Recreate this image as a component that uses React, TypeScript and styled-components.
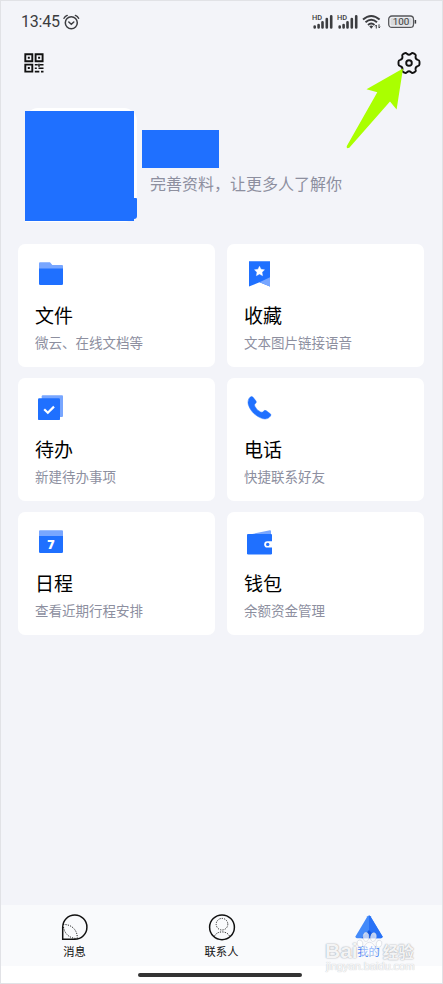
import React from 'react';
import styled, { createGlobalStyle } from 'styled-components';

const BLUE = '#1f70ff';
const LIGHT_BLUE = '#78a6ff';

const GlobalStyle = createGlobalStyle`
    * {
        box-sizing: border-box;
    }

    body {
        margin: 0;
        font-family: Roboto, 'Noto Sans CJK SC', sans-serif;
        color: #000;
    }
`;

const Screen = styled.div`
    display: flex;
    flex-direction: column;
    width: 443px;
    height: 984px;
    background: #f3f4f9;
    border: 1px solid #e1e2e6;
    overflow: hidden;
`;

const StatusBar = styled.div`
    display: flex;
    align-items: center;
    justify-content: space-between;
    height: 41px;
    padding: 1px 25px 0 20px;
`;

const StatusGroup = styled.div`
    display: flex;
    align-items: center;
    gap: 3px;
`;

const Clock = styled.span`
    font-family: Roboto, sans-serif;
    font-size: 16px;
    line-height: 20px;
    letter-spacing: -0.2px;
    color: #3b3c40;
`;

const Battery = styled.svg`
    margin-left: 3px;
`;

const Toolbar = styled.div`
    position: relative;
    display: flex;
    align-items: center;
    justify-content: space-between;
    height: 42px;
    padding: 0 21px 0 22px;
`;

const Pointer = styled.svg`
    position: absolute;
    left: 343px;
    top: 25px;
`;

const Profile = styled.div`
    display: flex;
    height: 159px;
    padding: 24px 0 0 24px;
`;

const Avatar = styled.div`
    width: 112px;
    height: 114px;
    padding-top: 3px;
    background: #fff;
    border-radius: 13px 13px 13px 0;
`;

const AvatarCover = styled.div`
    position: relative;
    width: 109px;
    height: 110px;
    background: ${BLUE};

    &::after {
        content: '';
        position: absolute;
        left: 109px;
        bottom: 2px;
        width: 3px;
        height: 21px;
        background: ${BLUE};
        border-radius: 0 1px 3px 0;
    }
`;

const ProfileInfo = styled.div`
    display: flex;
    flex-direction: column;
    padding: 22px 0 0 5px;
`;

const NameCover = styled.div`
    width: 77px;
    height: 38px;
    background: ${BLUE};
`;

const Signature = styled.div`
    margin: 5px 0 0 8px;
    font-size: 16px;
    line-height: 24px;
    color: #8d8f9f;
    white-space: nowrap;
`;

const CardGrid = styled.div`
    display: grid;
    grid-template-columns: 197px 197px;
    grid-auto-rows: 122.6px;
    gap: 11.5px 12px;
    padding: 1px 0 0 17px;
    flex: 1;
`;

const Card = styled.div`
    display: flex;
    flex-direction: column;
    padding: 15px 17px 0;
    background: #fff;
    border-radius: 7px;
`;

const CardIcon = styled.svg`
    flex: none;
    width: 30px;
    height: 30px;
`;

const CardTitle = styled.div`
    margin-top: 15.5px;
    font-size: 19px;
    line-height: 24px;
`;

const CardNote = styled.div`
    margin-top: 4.5px;
    font-size: 13.5px;
    line-height: 20px;
    color: #8d8f9f;
    white-space: nowrap;
`;

const TabBar = styled.div`
    position: relative;
    display: flex;
    height: 61px;
    background: #f9fafc;
`;

const Tab = styled.div<{ $active?: boolean }>`
    display: flex;
    flex: 1;
    flex-direction: column;
    align-items: center;
    padding-top: 8px;
    font-size: 11.3px;
    line-height: 16px;
    color: ${({ $active }) => ($active ? '#3f82f8' : '#111')};

    svg {
        margin-bottom: 3px;
    }
`;

const HomeArea = styled.div`
    display: flex;
    justify-content: center;
    height: 17px;
    padding-top: 7px;
    background: #fff;
`;

const HomeIndicator = styled.div`
    width: 164px;
    height: 4px;
    margin-right: 3px;
    border-radius: 2px;
    background: #333;
`;

const Watermark = styled.div`
    position: absolute;
    left: 324px;
    top: 24px;
    width: 94px;
    color: rgba(255, 255, 255, 0.9);
    text-shadow: 0 0 1px #a4a7ad, 0 0 2px #bcbec3;
    white-space: nowrap;
`;

const WatermarkBrand = styled.div`
    display: flex;
    align-items: center;
    height: 31px;
    padding-top: 12px;
    font-family: 'Liberation Sans', 'Noto Sans CJK SC', sans-serif;
    font-size: 21px;
    font-weight: bold;
    line-height: 18px;

    svg {
        flex: none;
        margin: -14px 0 0 -2px;
    }
`;

const WatermarkSuffix = styled.span`
    font-family: 'Noto Sans CJK SC', sans-serif;
    font-size: 15.5px;
    line-height: 16px;
`;

const WatermarkUrl = styled.div`
    font-family: 'Liberation Sans', sans-serif;
    font-size: 11.3px;
    line-height: 12px;
    padding: 0 0 0 1px;
    letter-spacing: -0.15px;
    text-shadow: 0 0 1px #c4c6cb, 0 0 1px #d4d6da;
`;

const AlarmIcon = () => (
    <svg width="17" height="17" viewBox="0 0 17 17" fill="none" stroke="#3b3c40" strokeWidth="1.5" strokeLinecap="round">
        <circle cx="8.3" cy="8.8" r="6" />
        <path d="M5.8 8l2.5 2.2L10.8 8M1 4.3Q2 2.2 4.2 1.4M15.6 4.3Q14.6 2.2 12.4 1.4" />
    </svg>
);

const SignalIcon = () => (
    <svg width="22" height="16" viewBox="0 0 22 16">
        <text x="0" y="6.2" fontFamily="Roboto, sans-serif" fontSize="7.4" fontWeight="500" fill="#3b3c40">HD</text>
        <path d="M2.7 13.5v-1M6.6 13.5v-2.5M10.5 13.5V8.3M14.8 13.5V5M19.2 13.5V2.3" stroke="#3b3c40" strokeWidth="2.6" strokeLinecap="round" />
    </svg>
);

const WifiIcon = () => (
    <svg width="20" height="16" viewBox="0 0 20 16" fill="none" stroke="#3b3c40" strokeWidth="1.9">
        <path d="M1 5.5Q9.2-1.7 17.6 5.5M3.5 8.3Q9.2 3.2 15 8.3M6 11Q9.2 8 12.5 11" />
        <path d="M7.3 12.3Q9.2 10.5 11.2 12.3L9.2 14.7Z" fill="#3b3c40" stroke="none" />
        <path d="M14.3 11v3.5M14.3 11l-1.2 1.3M17 10.3V14M17 14l1.2-1.3" strokeWidth="1" />
    </svg>
);

const BatteryIcon = () => (
    <Battery width="29" height="14" viewBox="0 0 29 14">
        <rect x="0.7" y="1" width="24.8" height="11.4" rx="3.2" fill="none" stroke="#55565a" strokeWidth="1.3" />
        <rect x="2.5" y="2.8" width="21.2" height="7.8" rx="1.5" fill="#d9dadd" />
        <path d="M27.4 5v3.6" stroke="#3b3c40" strokeWidth="1.5" />
        <text x="13.1" y="10.3" textAnchor="middle" fontFamily="Roboto, sans-serif" fontSize="9.8" fill="#3b3c40">100</text>
    </Battery>
);

const QrIcon = () => (
    <svg width="22" height="22" viewBox="0 0 22 22" fill="none" stroke="#111" strokeWidth="1.9">
        <path d="M2.3 2.3h7v7h-7ZM12.6 2.3h7v7h-7ZM2.3 12.6h7v7h-7Z" />
        <path d="M4.8 5.8h2M15.1 5.8h2M4.8 16.1h2" strokeWidth="2" />
        <path d="M11.8 12.8h3M17 12.8h3.5M11.8 16.2h2M15.5 16.2h5M11.8 19.6h4.5M18 19.6h2.5M16 11.8v3" strokeWidth="1.6" />
    </svg>
);

const GearIcon = () => (
    <svg width="24" height="24" viewBox="0 0 24 24" fill="none" stroke="#111" strokeWidth="1.9" strokeLinejoin="round">
        <path d="M7.3 2.4Q8.7 1.3 10 2.8Q12 4.7 14 2.8Q15.3 1.3 16.7 2.4L18.4 3.5Q19 4.2 18.6 5.5Q18.2 8.2 20.8 8.9Q22.5 9.3 22.5 10.8V13.2Q22.5 14.7 20.8 15.1Q18.2 15.8 18.6 18.5Q19 19.8 18.4 20.5L16.7 21.6Q15.3 22.7 14 21.2Q12 19.3 10 21.2Q8.7 22.7 7.3 21.6L5.6 20.5Q5 19.8 5.4 18.5Q5.8 15.8 3.2 15.1Q1.5 14.7 1.5 13.2V10.8Q1.5 9.3 3.2 8.9Q5.8 8.2 5.4 5.5Q5 4.2 5.6 3.5Z" />
        <circle cx="12" cy="12" r="2.8" />
    </svg>
);

const MessageIcon = () => (
    <svg width="30" height="29" viewBox="0 0 30 29" fill="none" stroke="#111">
        <path d="M2.7 26.2V14a12.1 12.1 0 1 1 12.1 12.2Z" strokeWidth="1.5" />
        <path d="M3 11.6C11 10.8 18 17 17.2 25.8M3.5 14C4.5 20.5 9 25 16 25.5" strokeWidth="0.9" strokeDasharray="1.2 1.2" />
    </svg>
);

const ContactIcon = () => (
    <svg width="28" height="29" viewBox="0 0 28 29" fill="none" stroke="#111">
        <circle cx="14" cy="14.3" r="12.4" strokeWidth="1.5" />
        <g strokeWidth="0.9" strokeDasharray="1.2 1.2">
            <circle cx="14" cy="11.2" r="5.8" />
            <path d="M6.3 23.4C9 17.4 19 17.4 21.7 23.4" />
        </g>
    </svg>
);

const MineIcon = () => (
    <svg width="28" height="29" viewBox="0 0 28 29">
        <path d="M12.5 3.3Q14 1.8 15.4 3.3L27.4 23.2Q27.8 25.2 26 25.2H2Q.2 25.2.6 23.2Z" fill="#438afa" />
        <path d="M14 2.6q.8 0 1.4.7l12 19.9q.4 2-1.4 2h-5L14 19Z" fill="#2871f6" />
        <path d="M14 17l7.5 8.2h-15Z" fill="#1559df" />
    </svg>
);

const PawIcon = () => (
    <svg width="27" height="27" viewBox="0 0 27 27" fill="#fff" fillOpacity="0.7" stroke="#d5d9e1" strokeWidth="0.7">
        <ellipse cx="4" cy="13.5" rx="2.8" ry="3.6" transform="rotate(-15 4 13.5)" />
        <ellipse cx="10" cy="7" rx="2.7" ry="4.4" />
        <ellipse cx="17.4" cy="7.2" rx="2.7" ry="4.4" transform="rotate(10 17.4 7.2)" />
        <ellipse cx="23" cy="13.8" rx="2.8" ry="3.6" transform="rotate(15 23 13.8)" />
        <path d="M9.5 14.5q4-4.5 8 0q1.8 2.6 3.5 4.5q3 7-4.5 6.5h-6q-7 .5-4.5-6Q7.7 17.5 9.5 14.5Z" fillOpacity="0.45" />
    </svg>
);

interface CardItem {
    title: string;
    note: string;
    icon: React.ReactNode;
}

const cards: CardItem[] = [
    {
        title: '文件',
        note: '微云、在线文档等',
        icon: (
            <>
                <path d="M4 10V4.4Q4 3.3 5 3.3h10L17.3 6H27q1 0 1 1v3Z" fill={LIGHT_BLUE} />
                <path d="M4 9.5h24v15.2q0 1.3-1.3 1.3H5.3Q4 26 4 24.7Z" fill={BLUE} />
            </>
        ),
    },
    {
        title: '收藏',
        note: '文本图片链接语音',
        icon: (
            <>
                <path d="M5 2.2h21v25.4l-10.5-4.4L5 27.6Z" fill={BLUE} />
                <path d="M26 18.3v9.3l-10.5-4.4Z" fill={LIGHT_BLUE} />
                <path d="M15.5 7.2l1.5 3.1 3.5.5-2.5 2.4.6 3.5-3.1-1.6-3.1 1.6.6-3.5-2.5-2.4 3.5-.5Z" fill="#fff" stroke="#fff" strokeWidth="0.4" strokeLinejoin="round" />
            </>
        ),
    },
    {
        title: '待办',
        note: '新建待办事项',
        icon: (
            <>
                <rect x="6.7" y="2.2" width="21.3" height="21.8" rx="1" fill={LIGHT_BLUE} />
                <rect x="3" y="5.3" width="22" height="21.8" rx="1.2" fill={BLUE} />
                <path d="M9.2 16.3l3.6 3.5 6.2-6.2" fill="none" stroke="#fff" strokeWidth="2.2" />
            </>
        ),
    },
    {
        title: '电话',
        note: '快捷联系好友',
        icon: (
            <path d="M6.3 4Q7.7 2.9 8.9 4.1L12 8Q12.8 9.4 11.4 10.5Q10 11.5 10.8 13.2Q12.4 17 16.6 19Q18.4 19.9 19.5 18.3Q20.7 16.7 22.3 17.7L26.3 20.8Q27.4 21.8 26.5 23Q23.8 27 18.5 25.6C11.5 23.3 6 17.7 4.3 11.5Q3.2 6.7 6.3 4Z" fill={BLUE} stroke={BLUE} strokeWidth="0.5" />
        ),
    },
    {
        title: '日程',
        note: '查看近期行程安排',
        icon: (
            <>
                <path d="M5 3.2h22q1 0 1 1V9.5H4V4.2q0-1 1-1Z" fill={LIGHT_BLUE} />
                <path d="M4 9h24v15.8q0 1.2-1.2 1.2H5.2Q4 26 4 24.8Z" fill={BLUE} />
                <text x="15.8" y="22.3" textAnchor="middle" fontFamily="'Open Sans', sans-serif" fontSize="12.5" fontWeight="800" fill="#fff">7</text>
            </>
        ),
    },
    {
        title: '钱包',
        note: '余额资金管理',
        icon: (
            <>
                <path d="M3.2 8L26 3.3q1 0 1 1V8Z" fill={LIGHT_BLUE} />
                <path d="M4 7h23q1 0 1 1v18.3q0 1.2-1.2 1.2H4.2Q3 27.5 3 26.3V8q0-1 1-1Z" fill={BLUE} />
                <path d="M28 14.3h-4.7a3.1 3.1 0 0 0 0 6.2H28Z" fill="#fff" />
                <circle cx="23.7" cy="17.4" r="1.7" fill={BLUE} />
            </>
        ),
    },
];

const App: React.FC = () => {

    return (
        <Screen>
            <GlobalStyle />
            <StatusBar>
                <StatusGroup>
                    <Clock>13:45</Clock>
                    <AlarmIcon />
                </StatusGroup>
                <StatusGroup>
                    <SignalIcon />
                    <SignalIcon />
                    <WifiIcon />
                    <BatteryIcon />
                </StatusGroup>
            </StatusBar>
            <Toolbar>
                <QrIcon />
                <GearIcon />
                <Pointer width="62" height="86" viewBox="0 0 62 86">
                    <path d="M59 1.5L22.5 22.3 33.3 25.3 2.7 79.2Q2.3 82.3 5.3 80.8L46 34.5 52.6 42.5Z" fill="#aaff00" />
                </Pointer>
            </Toolbar>
            <Profile>
                <Avatar>
                    <AvatarCover />
                </Avatar>
                <ProfileInfo>
                    <NameCover />
                    <Signature>完善资料，让更多人了解你</Signature>
                </ProfileInfo>
            </Profile>
            <CardGrid>
                {
                    cards.map((card: CardItem) => (
                        <Card key={card.title}>
                            <CardIcon viewBox="0 0 30 30">{card.icon}</CardIcon>
                            <CardTitle>{card.title}</CardTitle>
                            <CardNote>{card.note}</CardNote>
                        </Card>
                    ))
                }
            </CardGrid>
            <TabBar>
                <Tab>
                    <MessageIcon />
                    消息
                </Tab>
                <Tab>
                    <ContactIcon />
                    联系人
                </Tab>
                <Tab $active>
                    <MineIcon />
                    我的
                </Tab>
                <Watermark>
                    <WatermarkBrand>
                        Bai
                        <PawIcon />
                        <WatermarkSuffix>经验</WatermarkSuffix>
                    </WatermarkBrand>
                    <WatermarkUrl>jingyan.baidu.com</WatermarkUrl>
                </Watermark>
            </TabBar>
            <HomeArea>
                <HomeIndicator />
            </HomeArea>
        </Screen>
    );
};

export default App;
